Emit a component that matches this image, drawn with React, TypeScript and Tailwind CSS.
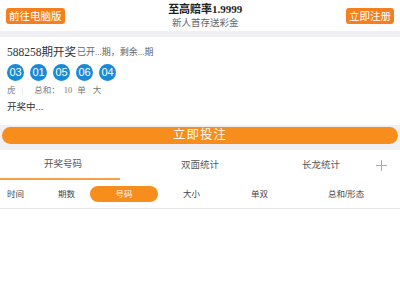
import React from "react";

const mix = { fontFamily: '"Liberation Serif", "Noto Sans CJK SC", serif' };
const sans = { fontFamily: '"Liberation Sans", "Noto Sans CJK SC", sans-serif' };

export default function App() {
  const balls = ["03", "01", "05", "06", "04"];
  return (
    <div className="w-[400px] h-[300px] bg-white overflow-hidden" style={sans}>
      {/* header */}
      <div className="h-[31px] flex items-center justify-between px-[6px] bg-white">
        <div className="h-[16px] px-[3px] rounded-[3px] bg-[#f57f1e] text-white text-[10.5px] leading-[16px]">前往电脑版</div>
        <div className="flex flex-col items-center pt-[1px]">
          <div className="text-[11px] leading-[13px] font-bold text-[#222]" style={mix}>至高赔率1.9999</div>
          <div className="text-[9.5px] leading-[12px] text-[#666] mt-[1px]">新人首存送彩金</div>
        </div>
        <div className="h-[16px] px-[3px] rounded-[3px] bg-[#f57f1e] text-white text-[10.5px] leading-[16px]">立即注册</div>
      </div>
      <div className="h-[6px] bg-[#efeff4]" />
      {/* draw info */}
      <div className="h-[88px] px-[7px] pt-[8px]">
        <div className="flex items-end leading-[14px]" style={mix}>
          <span className="text-[11.5px] text-[#333]">588258期开奖</span>
          <span className="text-[9px] text-[#666] ml-[1px]">已开...期，剩余...期</span>
        </div>
        <div className="flex gap-[6px] mt-[5px]">
          {balls.map((b) => (
            <div key={b} className="w-[17px] h-[17px] rounded-full bg-[#1b8ad6] text-white text-[11px] leading-[17px] text-center">{b}</div>
          ))}
        </div>
        <div className="flex items-center text-[8.5px] text-[#777] mt-[4px] leading-[11px]" style={mix}>
          <span>虎</span>
          <span className="ml-[6px] text-[#ccc]">|</span>
          <span className="ml-[11px]">总和：</span>
          <span className="ml-[4px]">10</span>
          <span className="ml-[5px]">单</span>
          <span className="ml-[7px]">大</span>
        </div>
        <div className="text-[9.5px] text-[#333] mt-[4px] leading-[13px]">开奖中...</div>
      </div>
      {/* bet button */}
      <div className="bg-[#efeff4] h-[25px] pt-[2px] px-[2px]">
        <div className="h-[17px] rounded-full bg-[#f78d1c] text-[#fff8ee] text-[12.5px] leading-[17px] text-center tracking-[1px]">立即投注</div>
      </div>
      {/* tabs */}
      <div className="h-[30px] flex items-center bg-white">
        <div className="w-[120px] h-full flex items-center justify-center text-[9.5px] text-[#555] border-b-[2px] border-[#f7a04a] pl-[6px]">开奖号码</div>
        <div className="w-[160px] text-center text-[9.5px] text-[#555]">双面统计</div>
        <div className="w-[82px] text-center text-[9.5px] text-[#555]">长龙统计</div>
        <div className="flex-1 flex justify-center">
          <svg width="11" height="11" viewBox="0 0 11 11"><path d="M5.5 0v11M0 5.5h11" stroke="#aaa" strokeWidth="1" /></svg>
        </div>
      </div>
      <div className="h-[29px] flex items-center text-[8.5px] text-[#444] border-b border-[#e5e5e5]">
        <div className="ml-[7px] w-[18px]">时间</div>
        <div className="ml-[33px] w-[18px]">期数</div>
        <div className="ml-[14px] w-[68px] h-[16px] rounded-full bg-[#f78d1c] text-white text-center leading-[16px]">号码</div>
        <div className="ml-[25px] w-[18px]">大小</div>
        <div className="ml-[50px] w-[18px]">单双</div>
        <div className="ml-[59px]">总和/形态</div>
      </div>
    </div>
  );
}
